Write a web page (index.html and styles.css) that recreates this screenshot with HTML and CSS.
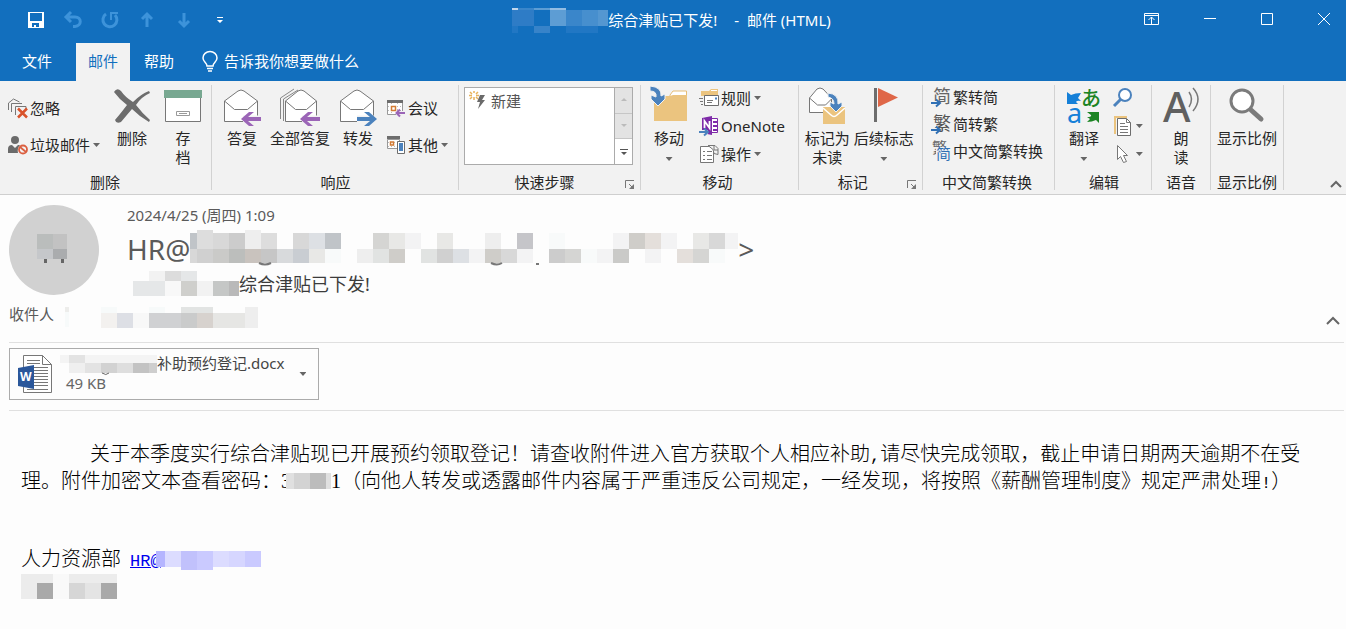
FILE: index.html
```html
<!DOCTYPE html>
<html lang="zh-CN">
<head>
    <meta charset="UTF-8">
    <meta name="viewport" content="width=device-width, initial-scale=1.0">
    <title>综合津贴已下发! - 邮件 (HTML)</title>
    <link rel="stylesheet" href="styles.css">
</head>
<body>
    <header class="top">
        <div class="titlebar">
            <div class="quick">
                <button type="button" aria-label="保存"><svg width="18" height="18" viewBox="0 0 18 18"><path fill="#fff" fill-rule="evenodd" d="M1 1h16v16H1zM3 2v8h12V2zM5 12v4h2v-2h2v2h3v-4z"/></svg></button>
                <button type="button" class="dim" aria-label="撤消"><svg width="18" height="18" viewBox="0 0 18 18"><path fill="none" stroke="#3d93da" stroke-width="3" d="M7 1L2 6l5 5M2 6h9c7 0 7 9 0 9.500H9"/></svg></button>
                <button type="button" class="dim" aria-label="恢复"><svg width="18" height="18" viewBox="0 0 18 18"><path fill="none" stroke="#3d93da" stroke-width="3" d="M5 3a7 7 0 1 0 9 1"/><path fill="none" stroke="#3d93da" stroke-width="2" d="M10 9V2h7"/></svg></button>
                <button type="button" class="dim" aria-label="上一项"><svg width="18" height="18" viewBox="0 0 18 18"><path fill="none" stroke="#3d93da" stroke-width="3" d="M9 16V3M4 8l5-5 5 5"/></svg></button>
                <button type="button" class="dim" aria-label="下一项"><svg width="18" height="18" viewBox="0 0 18 18"><path fill="none" stroke="#3d93da" stroke-width="3" d="M9 2v13M4 10l5 5 5-5"/></svg></button>
                <button type="button" aria-label="自定义"><svg width="18" height="18" viewBox="0 0 18 18"><path fill="#fff" d="M5 6h6v1H5zM5 9h6l-3 3z"/></svg></button>
            </div>
            <div class="title">
                <svg width="96" height="26" viewBox="0 0 96 26">
                    <path fill="#2e7cc6" d="M0 3h22v16H0zM22 20h16v6H22z"/>
                    <path fill="#c0d7ed" d="M0 1h6v2H0z"/>
                    <path fill="#3a86ca" d="M6 1h16v2H6zM54 3h16v16H54z"/>
                    <path fill="#5d9dd4" d="M22 1h16v2H22zM38 3h16v16H38z"/>
                    <path fill="#93bde3" d="M38 1h16v2H38z"/>
                    <path fill="#478fce" d="M70 3h16v16H70z"/>
                    <path fill="#5497d1" d="M86 3h10v16H86z"/>
                    <path fill="#2177c4" d="M0 19h6v7H0zM54 19h32v7H54z"/>
                    <path fill="#3783c9" d="M22 19h16v7H22z"/>
                </svg>
                <span>综合津贴已下发!</span><span class="title-app">-&nbsp; 邮件 (HTML)</span>
            </div>
            <div class="window-buttons">
                <button type="button" aria-label="功能区显示选项"><svg width="15" height="12" viewBox="0 0 15 12"><path fill="none" stroke="#fff" d="M.5.5h14v11H.5zM.5 2.500h14M7.500 11V4M4.500 7l3-3 3 3"/></svg></button>
                <button type="button" aria-label="最小化"><svg width="12" height="12" viewBox="0 0 12 12"><path fill="#fff" d="M0 5h12v1H0z"/></svg></button>
                <button type="button" aria-label="最大化"><svg width="12" height="12" viewBox="0 0 12 12"><path fill="none" stroke="#fff" d="M.5.5h11v11H.5z"/></svg></button>
                <button type="button" aria-label="关闭"><svg width="12" height="12" viewBox="0 0 12 12"><path fill="none" stroke="#fff" d="M0 0l12 12M12 0L0 12"/></svg></button>
            </div>
        </div>
        <nav class="tabs">
            <button type="button" class="tab file">文件</button>
            <button type="button" class="tab active">邮件</button>
            <button type="button" class="tab">帮助</button>
            <button type="button" class="tell">
                <svg width="16" height="21" viewBox="0 0 16 21"><path fill="none" stroke="#fff" stroke-width="1.500" d="M5 15c0-3-4-4-4-8a7 6.500 0 0 1 14 0c0 4-4 5-4 8zM5 17.500h6M6 20h4"/></svg>
                <span>告诉我你想要做什么</span>
            </button>
        </nav>
    </header>

    <section class="ribbon">
        <div class="group g-delete">
            <div class="tools">
                <div class="stack two">
                    <button type="button" class="small"><svg width="20" height="20" viewBox="0 0 20 20"><path fill="none" stroke="#777" d="M.5 12V5l5-4 6 3M3.500 14V5.500H14M7.500 17V8.500H18V11"/><path fill="none" stroke="#d9532c" stroke-width="2.500" d="M10 10.500l9 9M19 10.500l-9 9"/></svg><span>忽略</span></button>
                    <button type="button" class="small"><svg width="20" height="20" viewBox="0 0 20 20"><circle cx="7" cy="5" r="4" fill="#6b6b6b"/><path fill="#6b6b6b" d="M0 18v-4q0-4 4-4l3 3 3-3h2q-3 3-2 8z"/><circle cx="15" cy="14.500" r="4" fill="#f2f2f2" stroke="#db5f40" stroke-width="1.800"/><path stroke="#db5f40" stroke-width="1.800" d="M12 12l6 5"/></svg><span>垃圾邮件</span><i class="arrow"></i></button>
                </div>
                <button type="button" class="big"><svg width="38" height="38" viewBox="0 0 38 38"><path fill="#6d6d6d" d="M1 5q3-5 7-1 4 6 12 11Q28 7 36 4l1 2q-9 4-14 12 6 8 14 15l-1 2q-9-5-17-13-6 7-11 13-5 2-6-2Q8 26 14 18 6 12 1 5z"/></svg><span>删除</span></button>
                <button type="button" class="big"><svg width="38" height="38" viewBox="0 0 38 38"><path fill="#fff" stroke="#777" d="M1.500 9h35v25.500h-35z"/><path fill="#78a891" d="M0 3h38v8H0z"/><path fill="none" stroke="#999" d="M12.500 24.500h13v4h-13zM15 26.500h8"/></svg><span>存<br>档</span></button>
            </div>
            <div class="group-foot"><span>删除</span></div>
        </div>

        <div class="group g-respond">
            <div class="tools">
                <button type="button" class="big"><svg width="38" height="38" viewBox="0 0 38 38"><path fill="#fff" stroke="#777" d="M1.500 14v20.500h33V14L21 4q-3-2-6 0zM1.500 14l10 8.500h13l10-8.500"/><path stroke="#f2f2f2" stroke-width="7" d="M20 32h18"/><path fill="#9b65b7" d="M18 32l8-7h5l-6 5h13v4H25l6 5h-5z"/></svg><span>答复</span></button>
                <button type="button" class="big"><svg width="40" height="38" viewBox="0 0 40 38"><path fill="none" stroke="#888" d="M.5 32V11L14 2M3.500 34V12L18 3"/><path fill="#fff" stroke="#777" d="M5.500 14v20.500h31V14L24 4q-3-2-6 0zM5.500 14l10 8.500h11l10-8.500"/><path stroke="#f2f2f2" stroke-width="7" d="M22 32h18"/><path fill="#9b65b7" d="M20 32l8-7h5l-6 5h13v4H27l6 5h-5z"/></svg><span>全部答复</span></button>
                <button type="button" class="big"><svg width="38" height="38" viewBox="0 0 38 38"><path fill="#fff" stroke="#777" d="M1.500 14v20.500h33V14L21 4q-3-2-6 0zM1.500 14l10 8.500h13l10-8.500"/><path stroke="#f2f2f2" stroke-width="7" d="M18 32h18"/><path fill="#4b82bd" d="M38 32l-8-7h-5l6 5H18v4h13l-6 5h5z"/></svg><span>转发</span></button>
                <div class="stack two">
                    <button type="button" class="small"><svg width="20" height="20" viewBox="0 0 20 20"><path fill="#fff" stroke="#999" d="M1.500 4.500h15v12h-15z"/><path stroke="#bbb" stroke-dasharray="1 2" d="M2 8.500h14M2 12.500h14M5.500 5v11M11.500 5v11"/><path fill="#6d6d6d" d="M1 2h16v3H1z"/><path fill="#fff" stroke="#d27b35" stroke-width="1.500" d="M5.500 8.500h4v4h-4z"/><path stroke="#f2f2f2" stroke-width="4" d="M10 15h9"/><path fill="none" stroke="#9b65b7" stroke-width="2" d="M19 15h-8M14 11.500L10.500 15l3.500 3.500"/></svg><span>会议</span></button>
                    <button type="button" class="small"><svg width="20" height="20" viewBox="0 0 20 20"><path fill="#fff" stroke="#999" d="M1.500 4.500h12v9h-12z"/><path stroke="#bbb" stroke-dasharray="1 2" d="M2 7.500h11M2 11.500h11"/><path fill="#6d6d6d" d="M1 1h13v3H1z"/><path fill="#fff" stroke="#d27b35" stroke-width="1.500" d="M4.500 7h3v3h-3z"/><path fill="#fff" stroke="#6d6d6d" d="M11.500 6.500h7v12h-7z"/><path fill="#4b82bd" d="M13 8h4v8h-4z"/></svg><span>其他</span><i class="arrow"></i></button>
                </div>
            </div>
            <div class="group-foot"><span>响应</span></div>
        </div>

        <div class="group g-steps">
            <div class="tools">
                <div class="gallery">
                    <button type="button" class="step"><svg width="18" height="20" viewBox="0 0 18 20"><path stroke="#e8b35c" stroke-width="1.500" d="M5 0v2M5 6v3M0 4.500h3M7 4.500h3M1 1l2 2M9 1L7 3M1 8l2-2M9 8L7 6"/><path fill="#6a6a6a" d="M11 4h5l-3 5h3l-7 9 2-7H8z"/></svg><span>新建</span></button>
                    <div class="scroller">
                        <button type="button" aria-label="上"><svg width="6" height="4" viewBox="0 0 6 4"><path fill="#bbb" d="M0 3h6L3 0z"/></svg></button>
                        <button type="button" aria-label="下"><svg width="6" height="4" viewBox="0 0 6 4"><path fill="#bbb" d="M0 0h6L3 3z"/></svg></button>
                        <button type="button" class="more" aria-label="更多"><svg width="8" height="8" viewBox="0 0 8 8"><path fill="#555" d="M0 1h8v1H0zM1 4h6L4 7z"/></svg></button>
                    </div>
                </div>
            </div>
            <div class="group-foot"><span>快速步骤</span><button type="button" class="launcher" aria-label="快速步骤设置"><svg width="10" height="10" viewBox="0 0 10 10"><path fill="none" stroke="#777" d="M.5 8V.5H9M4 4l4 4"/><path fill="#777" d="M9 4v5H4z"/></svg></button></div>
        </div>

        <div class="group g-move">
            <div class="tools">
                <button type="button" class="big"><svg width="38" height="38" viewBox="0 0 38 38"><path fill="#fff" stroke="#e6bd75" d="M20 8l3-4h13.500v8H20z"/><path fill="#ebc47f" d="M4 9h16l3-1h14v26H4z"/><path fill="#4b82bd" stroke="#f2f2f2" d="M0-1q12 1 11 10l4-2v5l-7 7-7-7V8l5 2q1-6-6-6z"/></svg><span>移动</span><i class="arrow"></i></button>
                <div class="stack three">
                    <button type="button" class="small"><svg width="20" height="20" viewBox="0 0 20 20"><path fill="#ebc47f" d="M2 3h8l2-2h7v7H2z"/><path fill="#fff" d="M12 2h6v1h-6z"/><path fill="#fff" stroke="#6d6d6d" d="M5.500 7.500h14v10h-14z"/><path stroke="#4b82bd" stroke-width="2" d="M16 10.500h2"/><path stroke="#777" d="M0 10.500h4M1 13.500h3M2 16.500h2M8 12.500h6M8 14.500h5"/></svg><span>规则</span><i class="arrow"></i></button>
                    <button type="button" class="small"><svg width="20" height="20" viewBox="0 0 20 20"><path fill="#fff" stroke="#7e2aa8" d="M11.500 2.500h7v14h-7z"/><path fill="#7e2aa8" d="M3 2l10-2v19L3 17zM14 5h4v2h-4zM14 9h4v2h-4zM14 13h4v2h-4z"/><path fill="none" stroke="#fff" stroke-width="1.800" d="M5.500 12V5l5 7V5"/><path stroke="#f2f2f2" stroke-width="4" d="M0 16h9"/><path fill="none" stroke="#4b82bd" stroke-width="2" d="M0 16h8M5 12.500L9 16l-4 3.500"/></svg><span>OneNote</span></button>
                    <button type="button" class="small"><svg width="20" height="20" viewBox="0 0 20 20"><path fill="#fff" stroke="#777" d="M1.500 2.500h13v16h-13z"/><path fill="none" stroke="#777" d="M4 7.500h2M8 7.500h5M4 11.500h2M8 11.500h5M4 15.500h2M8 15.500h5"/><path fill="#f2f2f2" stroke="#777" d="M9 1.500h7l3 3v6l-4-1-1-4z"/><path fill="none" stroke="#777" d="M15 2v4h4"/></svg><span>操作</span><i class="arrow"></i></button>
                </div>
            </div>
            <div class="group-foot"><span>移动</span></div>
        </div>

        <div class="group g-mark">
            <div class="tools">
                <button type="button" class="big"><svg width="38" height="38" viewBox="0 0 38 38"><path fill="#fff" stroke="#777" d="M1.500 11v14.500h22V11L15 2q-3-2-6 0zM1.500 11l8 7h8l7-7"/><path fill="#ebc47f" d="M15 20h22v17H15z"/><path fill="none" stroke="#fff" stroke-width="1.500" d="M15 21l8 7q3 3 6 0l8-7"/><path fill="#4b82bd" stroke="#f2f2f2" d="M20 6q11 1 10 11l4-2v4l-6 6-6-6v-4l4 2q0-6-6-7z"/></svg><span>标记为<br>未读</span></button>
                <button type="button" class="big"><svg width="38" height="38" viewBox="0 0 38 38"><path fill="#6d6d6d" d="M9 1h3v34H9z"/><path fill="#df6748" d="M13 1l20 9.500L13 20z"/></svg><span>后续标志</span><i class="arrow"></i></button>
            </div>
            <div class="group-foot"><span>标记</span><button type="button" class="launcher" aria-label="标记设置"><svg width="10" height="10" viewBox="0 0 10 10"><path fill="none" stroke="#777" d="M.5 8V.5H9M4 4l4 4"/><path fill="#777" d="M9 4v5H4z"/></svg></button></div>
        </div>

        <div class="group g-chinese">
            <div class="tools">
                <div class="stack three tight">
                    <button type="button" class="small"><svg width="20" height="20" viewBox="0 0 20 20"><text x="2" y="16" font-size="18" fill="#666">简</text><path stroke="#f2f2f2" stroke-width="4" d="M0 16h8"/><path fill="none" stroke="#2f70b5" stroke-width="2" d="M0 16h8M5 12.500L9 16l-4 3.500"/></svg><span>繁转简</span></button>
                    <button type="button" class="small"><svg width="20" height="20" viewBox="0 0 20 20"><text x="2" y="16" font-size="18" fill="#555">繁</text><path stroke="#f2f2f2" stroke-width="4" d="M0 16h8"/><path fill="none" stroke="#2f70b5" stroke-width="2" d="M0 16h8M5 12.500L9 16l-4 3.500"/></svg><span>简转繁</span></button>
                    <button type="button" class="small"><svg width="20" height="20" viewBox="0 0 20 20"><text x="1" y="12" font-size="15" fill="#666">繁</text><path fill="#f2f2f2" d="M5 6h15v14H5z"/><text x="5" y="18" font-size="15" fill="#2f70b5">简</text></svg><span>中文简繁转换</span></button>
                </div>
            </div>
            <div class="group-foot"><span>中文简繁转换</span></div>
        </div>

        <div class="group g-edit">
            <div class="tools">
                <button type="button" class="big"><svg width="38" height="38" viewBox="0 0 38 38"><text x="16" y="19" font-size="20" font-weight="500" fill="#1c8423">あ</text><text x="2" y="36" font-size="27" fill="#1580d8">a</text><path fill="#1580d8" d="M2 5l4 3q4-2 10-2l-3 5 3 3q-4-1-5 1l2 2H2z"/><path fill="#1c8423" d="M22 25h12v11l-3-3q-4 2-9 2l3-3-3-2q5 0 4-2z"/></svg><span>翻译</span><i class="arrow"></i></button>
                <div class="stack three">
                    <button type="button" class="small" aria-label="查找"><svg width="20" height="20" viewBox="0 0 20 20"><path stroke="#4b82bd" stroke-width="3" d="M1 18l7-7"/><circle cx="12" cy="7" r="6" fill="#fff" stroke="#4b82bd" stroke-width="2"/></svg></button>
                    <button type="button" class="small" aria-label="相关"><svg width="20" height="20" viewBox="0 0 20 20"><path fill="#ebc47f" d="M1 0h13v2H3v16H1z"/><path fill="#fff" stroke="#6d6d6d" d="M4.500 2.500h9l4 4v13h-13z"/><path fill="none" stroke="#777" d="M13.500 2.500v4h4M7 7.500h5M7 10.500h8M7 13.500h8M7 16.500h8"/></svg><i class="arrow"></i></button>
                    <button type="button" class="small" aria-label="选择"><svg width="20" height="20" viewBox="0 0 20 20"><path fill="#fff" stroke="#777" d="M4.500 1.500v14l3-3 3 6 3-1-3-6h4z"/></svg><i class="arrow"></i></button>
                </div>
            </div>
            <div class="group-foot"><span>编辑</span></div>
        </div>

        <div class="group g-voice">
            <div class="tools">
                <button type="button" class="big"><svg width="38" height="38" viewBox="0 0 38 38"><text x="1" y="35" font-size="42" font-weight="500" fill="#606060">A</text><path fill="none" stroke="#777" stroke-width="1.500" d="M27 5q5 7 0 15M31 1q10 11 0 23"/></svg><span>朗<br>读</span></button>
            </div>
            <div class="group-foot"><span>语音</span></div>
        </div>

        <div class="group g-zoom">
            <div class="tools">
                <button type="button" class="big"><svg width="38" height="38" viewBox="0 0 38 38"><path stroke="#7b7b7b" stroke-width="5" stroke-linecap="round" d="M23 23l10 9"/><circle cx="14" cy="14" r="11" fill="#fff" stroke="#7b7b7b" stroke-width="3"/></svg><span>显示比例</span></button>
            </div>
            <div class="group-foot"><span>显示比例</span></div>
        </div>

        <button type="button" class="collapse" aria-label="折叠功能区"><svg width="12" height="8" viewBox="0 0 12 8"><path fill="none" stroke="#666" stroke-width="2" d="M1 7l5-5 5 5"/></svg></button>
    </section>

    <main class="mail">
        <div class="mail-head">
            <svg class="avatar" width="90" height="90" viewBox="0 0 90 90">
                <circle cx="45" cy="45" r="45" fill="#d1d1d1"/>
                <path fill="#babdbc" d="M28 29h16v15H28z"/>
                <path fill="#c2c2c2" d="M44 29h14v15H44z"/>
                <path fill="#c5c7ca" d="M28 44h16v10H28z"/>
                <path fill="#aaacae" d="M44 44h14v10H44z"/>
                <path fill="#666" d="M35 54h3v4h-3zM52 54h3v4h-3z"/>
            </svg>
            <div class="info">
                <div class="date">2024/4/25 (周四) 1:09</div>
                <div class="from">
                    <span>HR@</span>
                    <svg width="548" height="38" viewBox="0 0 548 38">
                        <path fill="#c0c4c8" d="M0 3h7v16H0zM135 3h16v16h-16z"/>
                        <path fill="#dddddd" d="M7 0h16v19H7zM71 3h16v16H71z"/>
                        <path fill="#d8d8d8" d="M23 3h16v16H23zM103 3h16v16h-16zM0 19h7v14H0zM311 19h16v14h-16zM519 3h16v16h-16z"/>
                        <path fill="#cccccc" d="M39 3h16v16H39zM359 19h16v14h-16z"/>
                        <path fill="#eeeeee" d="M55 0h16v19H55zM295 3h16v16h-16zM167 19h16v14h-16z"/>
                        <path fill="#dde0e4" d="M119 3h16v16h-16zM263 19h16v14h-16z"/>
                        <path fill="#d0d0d0" d="M7 19h16v14H7zM247 19h16v14h-16z"/>
                        <path fill="#cacac8" d="M23 19h16v14H23zM423 19h16v14h-16z"/>
                        <path fill="#bcbebc" d="M39 19h16v14H39z"/>
                        <path fill="#c9c3be" d="M55 19h16v14H55z"/>
                        <path fill="#c6c6c6" d="M71 19h16v14H71z"/>
                        <path fill="#d8dadc" d="M87 19h16v14H87z"/>
                        <path fill="#c9cdd2" d="M103 19h16v14h-16z"/>
                        <path fill="#e8e8e6" d="M119 19h16v14h-16zM199 3h16v16h-16zM247 3h16v16h-16zM503 3h16v16h-16z"/>
                        <path fill="#f8fafa" d="M135 19h16v14h-16zM359 3h16v16h-16zM391 19h16v14h-16zM519 19h16v14h-16z"/>
                        <path fill="#d5d5d3" d="M183 3h16v16h-16zM375 19h16v14h-16zM503 19h16v14h-16z"/>
                        <path fill="#f3f3f4" d="M215 3h16v16h-16zM279 19h16v14h-16zM327 19h16v14h-16zM407 19h16v14h-16zM423 3h16v16h-16zM455 19h16v14h-16zM471 3h16v16h-16zM535 3h13v16h-13z"/>
                        <path fill="#e1e3e2" d="M183 19h16v14h-16zM231 19h16v14h-16z"/>
                        <path fill="#cfcdc9" d="M199 19h16v14h-16zM295 19h16v14h-16zM439 3h16v16h-16z"/>
                        <path fill="#c5c5c9" d="M327 3h16v16h-16z"/>
                        <path fill="#e4dfdb" d="M455 3h16v16h-16zM487 19h16v14h-16z"/>
                        <path fill="none" stroke="#777" stroke-width="2" d="M69 33q6 3 12 0M301 33q6 3 11 0M346 34h3"/>
                    </svg>
                    <span>&gt;</span>
                </div>
                <div class="subject">
                    <svg width="106" height="26" viewBox="0 0 106 26">
                        <path fill="#f2f2f2" d="M16 0h16v10H16zM64 10h16v15H64z"/>
                        <path fill="#dcdcdc" d="M32 0h16v10H32z"/>
                        <path fill="#e5e7e8" d="M48 0h16v10H48zM0 10h32v15H0z"/>
                        <path fill="#f8f8f8" d="M32 10h16v15H32z"/>
                        <path fill="#cfcfcc" d="M48 10h16v15H48z"/>
                        <path fill="#c5c7c6" d="M80 10h16v15H80z"/>
                        <path fill="#b9b9b9" d="M96 10h10v15H96z"/>
                    </svg>
                    <span>综合津贴已下发!</span>
                </div>
            </div>
        </div>
        <div class="to">
            <span>收件人</span>
            <svg width="194" height="22" viewBox="0 0 194 22">
                <path fill="#ededeb" d="M0 0h4v5H0z"/>
                <path fill="#f7fafa" d="M0 5h4v15H0zM84 0h16v6H84zM36 0h16v6H36z"/>
                <path fill="#f3f1ef" d="M36 6h16v15H36z"/>
                <path fill="#dddfe5" d="M52 6h16v15H52z"/>
                <path fill="#f8f8f8" d="M68 6h16v15H68z"/>
                <path fill="#d0d1d3" d="M84 6h32v15H84z"/>
                <path fill="#e2e4e3" d="M116 0h32v6h-32z"/>
                <path fill="#cacbcb" d="M116 6h16v15h-16z"/>
                <path fill="#d7d2ce" d="M132 6h16v15h-16z"/>
                <path fill="#e6e6e4" d="M148 6h32v15h-32z"/>
                <path fill="#eeeeee" d="M180 0h13v21h-13z"/>
            </svg>
            <button type="button" class="collapse-head" aria-label="折叠邮件头"><svg width="14" height="9" viewBox="0 0 14 9"><path fill="none" stroke="#666" stroke-width="2" d="M1 8l6-6 6 6"/></svg></button>
        </div>
        <div class="attachments">
            <button type="button" class="attachment">
                <svg width="36" height="40" viewBox="0 0 36 40">
                    <path fill="#fff" stroke="#777" d="M6.500 1.500h19l9 9v28h-28z"/>
                    <path fill="none" stroke="#777" d="M25.500 1.500v9h9M10 6.500h13M10 9.500h13M17 13.500h14M17 16.500h14M17 19.500h14M17 22.500h14M17 25.500h14M17 28.500h14M17 31.500h14M10 35.500h21"/>
                    <path fill="#2b579a" d="M1 14l16-3v24L1 32z"/>
                    <text x="3" y="27" font-size="12" font-weight="700" fill="#fff">W</text>
                </svg>
                <span class="file-text">
                    <span class="file-name">
                        <svg width="97" height="22" viewBox="0 0 97 22">
                            <path fill="#f4f4f4" d="M0 2h9v8H0zM25 2h16v8H25zM41 2h56v8H41z"/>
                            <path fill="#e3e3e3" d="M9 2h16v8H9zM25 10h16v10H25z"/>
                            <path fill="#efefef" d="M9 10h16v10H9z"/>
                            <path fill="#d2d2d2" d="M41 10h16v10H41z"/>
                            <path fill="#dedede" d="M57 10h16v10H57z"/>
                            <path fill="#c3c3c3" d="M73 10h16v10H73z"/>
                            <path fill="#cecece" d="M89 10h8v10h-8z"/>
                            <path fill="none" stroke="#666" d="M42 20q4 3 7 0"/>
                        </svg>
                        <span>补助预约登记.docx</span>
                    </span>
                    <span class="file-size">49 KB</span>
                </span>
                <i class="arrow"></i>
            </button>
        </div>

        <article class="message">
            <p class="notice">关于本季度实行综合津贴现已开展预约领取登记！请查收附件进入官方获取个人相应补助<span class="half">,</span>请尽快完成领取，截止申请日期两天逾期不在受理。附件加密文本查看密码：<span class="digit">3</span><svg class="mask" width="45" height="18" viewBox="0 0 45 18"><path fill="#e0e0e0" d="M0 0h8v16H0zM40 0h5v16h-5z"/><path fill="#d3d3d3" d="M8 0h16v16H8z"/><path fill="#bcbcbc" d="M24 0h16v16H24z"/></svg><span class="digit">1</span>（向他人转发或透露邮件内容属于严重违反公司规定，一经发现，将按照《薪酬管理制度》规定严肃处理<span class="half">!</span>）</p>
            <p class="sign">人力资源部<a href="#" class="half">HR@<svg class="mask" width="106" height="20" viewBox="0 0 106 20"><path fill="#b5b5ff" d="M0 2h9v16H0z"/><path fill="#dcdcff" d="M9 2h16v16H9zM57 2h16v16H57z"/><path fill="#c1c1fc" d="M25 2h16v19H25z"/><path fill="#cacaff" d="M41 2h16v19H41zM89 2h16v16H89z"/><path fill="#d6d6ff" d="M73 2h16v16H73z"/></svg></a></p>
            <svg class="sign-mask" width="104" height="26" viewBox="0 0 104 26">
                <path fill="#ececec" d="M0 1h32v9H0zM0 10h16v16H0zM48 1h48v9H48z"/>
                <path fill="#a9a9a9" d="M16 10h16v16H16zM80 10h16v16H80z"/>
                <path fill="#f9f9f9" d="M32 1h16v25H32z"/>
                <path fill="#d6d6d6" d="M48 10h16v16H48z"/>
                <path fill="#e4e4e4" d="M64 10h16v16H64z"/>
            </svg>
        </article>
    </main>
</body>
</html>
```

FILE: styles.css
```css
* {
    box-sizing: border-box;
}

body {
    margin: 0;
    font-family: "Noto Sans", "Noto Sans CJK SC", sans-serif;
    font-size: 15px;
    line-height: 19px;
    color: #262626;
    background: #fdfdfd;
}

button {
    margin: 0;
    padding: 0;
    border: none;
    background: none;
    font: inherit;
    color: inherit;
    cursor: pointer;
}

svg {
    display: block;
    flex: none;
    overflow: visible;
}

/* title bar */
.top {
    background: #126fbe;
    color: #fff;
}

.titlebar {
    display: grid;
    grid-template-columns: 1fr auto 1fr;
    align-items: center;
    height: 40px;
}

.quick {
    display: flex;
    gap: 19px;
    padding-left: 27px;
}

.title {
    display: flex;
    align-items: center;
}

.title-app {
    margin: 0 3px 0 17px;
}

.window-buttons {
    display: flex;
    justify-content: flex-end;
    align-items: center;
    gap: 45px;
    padding: 0 16px 2px 0;
}

.tabs {
    display: flex;
    gap: 2px;
    padding: 3px 10px 0;
}

.tab {
    height: 38px;
    padding: 0 12px 2px;
}

.tab.file {
    margin-right: 10px;
}

.tab.active {
    background: #f2f2f2;
    color: #126fbe;
}

.tell {
    display: flex;
    align-items: center;
    gap: 6px;
    margin-left: 14px;
    padding-bottom: 2px;
}

/* ribbon */
.ribbon {
    display: flex;
    padding: 4px 0;
    background: #f2f2f2;
    border-bottom: 1px solid #cfcfcf;
}

.group {
    display: flex;
    flex-direction: column;
    justify-content: space-between;
    border-right: 1px solid #d2d2d2;
}

.tools {
    display: flex;
    align-items: flex-start;
    padding-top: 2px;
    min-height: 84px;
}

.group-foot {
    display: flex;
    align-items: flex-end;
    justify-content: center;
    height: 21px;
    line-height: 16px;
}

.group-foot span {
    flex: 1;
    text-align: center;
}

.launcher {
    margin-right: 5px;
}

.big {
    display: flex;
    flex-direction: column;
    align-items: center;
    gap: 4px;
    white-space: nowrap;
}

.big .arrow {
    margin-top: 5px;
}

.small {
    display: flex;
    align-items: center;
    gap: 2px;
    height: 20px;
    white-space: nowrap;
}

.arrow {
    flex: none;
    width: 7px;
    height: 4px;
    background: #666;
    clip-path: polygon(0 0, 100% 0, 50% 100%);
}

.small .arrow {
    margin-left: 1px;
}

.stack {
    display: flex;
    flex-direction: column;
    align-items: flex-start;
}

.two {
    gap: 17px;
    padding-top: 11px;
}

.three {
    gap: 8px;
    padding-top: 1px;
}

.three.tight {
    gap: 7px;
    padding-top: 0;
}

.g-delete {
    padding: 0 9px 0 8px;
}

.g-delete .tools {
    gap: 13px;
}

.g-respond {
    padding: 0 10px 0 11px;
}

.g-respond .tools {
    gap: 9px;
}

.g-steps {
    padding-left: 5px;
}

.g-steps .tools {
    padding-right: 7px;
}

.g-move {
    padding: 0 13px 0 9px;
}

.g-move .tools {
    gap: 11px;
}

.g-mark .tools {
    gap: 4px;
    padding: 2px 8px 0 6px;
}

.g-chinese {
    padding: 0 11px 0 8px;
}

.g-edit {
    padding: 0 8px 0 10px;
}

.g-edit .tools {
    gap: 10px;
}

.g-voice {
    padding: 0 10px;
}

.g-zoom {
    padding: 0 6px;
}

.gallery {
    display: flex;
    align-items: stretch;
    height: 78px;
    border: 1px solid #ababab;
    background: #fff;
}

.step {
    display: flex;
    align-items: center;
    align-self: flex-start;
    gap: 4px;
    width: 149px;
    padding: 3px 4px;
    color: #555;
}

.scroller {
    display: flex;
    flex-direction: column;
    width: 18px;
    border-left: 1px solid #ababab;
}

.scroller button {
    display: flex;
    flex: 1;
    align-items: center;
    justify-content: center;
    background: #e3e3e3;
    border-bottom: 1px solid #c6c6c6;
}

.scroller .more {
    background: #fff;
    border-bottom: none;
}

.collapse {
    align-self: flex-end;
    margin-left: auto;
    padding: 0 4px 2px 0;
}

/* mail header */
.mail-head {
    display: flex;
    gap: 28px;
    padding: 10px 9px 0;
}

.info {
    color: #5a5a5a;
}

.date {
    height: 25px;
    line-height: 20px;
}

.from {
    display: flex;
    align-items: center;
    height: 38px;
    font-size: 28px;
    line-height: 38px;
}

.subject {
    display: flex;
    align-items: center;
    padding: 3px 0 0 6px;
    font-size: 18px;
    line-height: 26px;
    color: #3c3c3c;
}

.to {
    display: flex;
    align-items: flex-start;
    gap: 11px;
    margin-left: 9px;
    padding: 7px 6px 13px 0;
    color: #5a5a5a;
    line-height: 20px;
}

.to svg {
    margin-top: 3px;
}

.collapse-head {
    margin-left: auto;
    padding-top: 9px;
}

.attachments {
    margin: 0 2px 0 9px;
    padding: 5px 0 10px;
    border-top: 1px solid #e0e0e0;
    border-bottom: 1px solid #e0e0e0;
}

.attachment {
    display: flex;
    align-items: center;
    height: 52px;
    padding: 0 12px 0 7px;
    border: 1px solid #ababab;
    color: #444;
    text-align: left;
}

.file-text {
    padding: 0 15px 4px 7px;
}

.file-name {
    display: flex;
    align-items: center;
    height: 22px;
}

.file-size {
    display: block;
    padding-left: 6px;
    line-height: 17px;
    color: #666;
}

/* message */
.message {
    padding: 28px 40px 20px 21px;
    font-family: "Noto Sans CJK SC", sans-serif;
    font-size: 20px;
    font-weight: 300;
    line-height: 27px;
    color: #000;
}

.message p {
    margin: 0;
}

.message .mask {
    display: inline-block;
    margin-left: -5px;
    vertical-align: -3px;
}

.notice {
    text-indent: 69px;
}

.half,
.digit {
    font-family: "Liberation Mono", monospace;
    font-size: 17px;
    line-height: 17px;
}

.digit {
    font-family: "Liberation Serif", serif;
    font-size: 20px;
}

.message .sign {
    margin-top: 51px;
}

.sign a {
    margin-left: 9px;
    color: #0000ee;
}

.sign-mask {
    margin-top: 2px;
}
```
